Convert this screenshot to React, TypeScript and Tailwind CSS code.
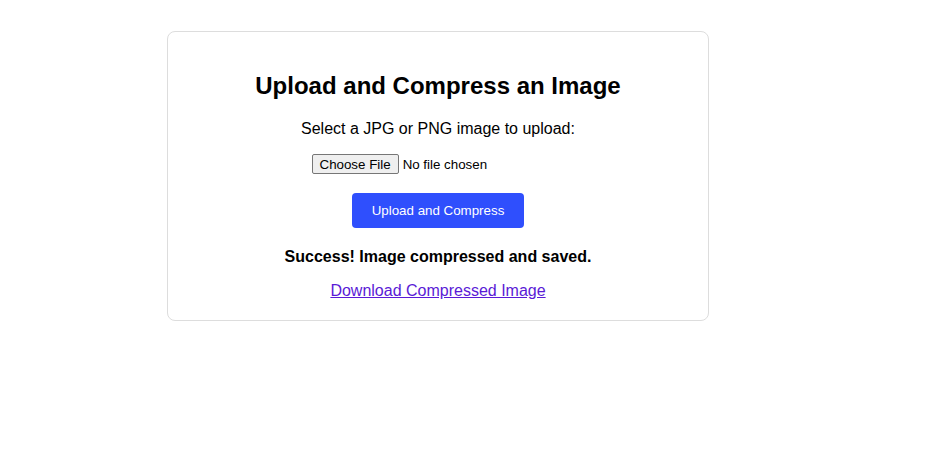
export default function App() {
  return (
    <div className="min-h-screen bg-white pt-[31px] font-['Liberation_Sans',Arial,sans-serif] text-black">
      <div className="ml-[167px] w-[542px] rounded-lg border border-[#dddddd] px-5 pt-[40px] pb-[20px] flex flex-col items-center text-center">
        <h1 className="text-[24px] leading-[28px] font-bold">Upload and Compress an Image</h1>
        <p className="mt-[20px] text-[16px] leading-[18px]">Select a JPG or PNG image to upload:</p>
        <input
          type="file"
          accept="image/png, image/jpeg"
          className="mt-[16px] w-[253px] text-[13.33px] leading-[20px] text-left file:mr-1 file:h-[20px] file:rounded-[2px] file:border file:border-[#767676] file:bg-[#efefef] file:px-[7px] file:text-[13.33px] file:text-black"
        />
        <button className="mt-[18px] h-[35px] w-[172px] rounded-[4px] bg-[#2f4ffd] text-[13.33px] text-white">
          Upload and Compress
        </button>
        <p className="mt-[20px] text-[16px] leading-[18px] font-bold">Success! Image compressed and saved.</p>
        <a href="#" className="mt-[16px] text-[16px] leading-[18px] text-[#5a1ad6] underline">
          Download Compressed Image
        </a>
      </div>
    </div>
  )
}
